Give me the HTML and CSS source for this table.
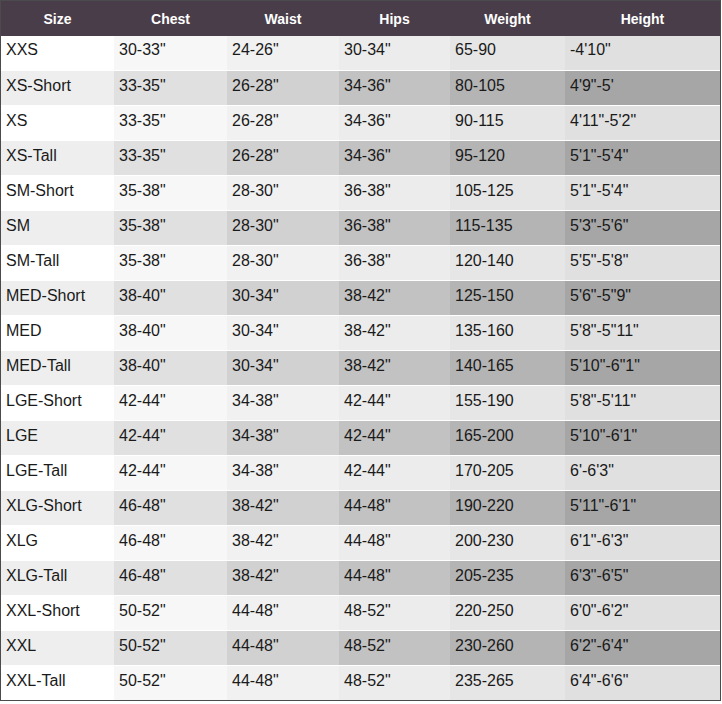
FILE: index.html
```html
<!DOCTYPE html>
<html>
<head>
<meta charset="utf-8">
<link rel="stylesheet" href="styles.css">
</head>
<body>
<table class="sizes">
  <colgroup>
    <col class="c-size"><col class="c-chest"><col class="c-waist"><col class="c-hips"><col class="c-weight"><col class="c-height">
  </colgroup>
  <thead>
    <tr><th>Size</th><th>Chest</th><th>Waist</th><th>Hips</th><th>Weight</th><th>Height</th></tr>
  </thead>
  <tbody>
    <tr><td>XXS</td><td>30-33"</td><td>24-26"</td><td>30-34"</td><td>65-90</td><td>-4'10"</td></tr>
    <tr><td>XS-Short</td><td>33-35"</td><td>26-28"</td><td>34-36"</td><td>80-105</td><td>4'9"-5'</td></tr>
    <tr><td>XS</td><td>33-35"</td><td>26-28"</td><td>34-36"</td><td>90-115</td><td>4'11"-5'2"</td></tr>
    <tr><td>XS-Tall</td><td>33-35"</td><td>26-28"</td><td>34-36"</td><td>95-120</td><td>5'1"-5'4"</td></tr>
    <tr><td>SM-Short</td><td>35-38"</td><td>28-30"</td><td>36-38"</td><td>105-125</td><td>5'1"-5'4"</td></tr>
    <tr><td>SM</td><td>35-38"</td><td>28-30"</td><td>36-38"</td><td>115-135</td><td>5'3"-5'6"</td></tr>
    <tr><td>SM-Tall</td><td>35-38"</td><td>28-30"</td><td>36-38"</td><td>120-140</td><td>5'5"-5'8"</td></tr>
    <tr><td>MED-Short</td><td>38-40"</td><td>30-34"</td><td>38-42"</td><td>125-150</td><td>5'6"-5"9"</td></tr>
    <tr><td>MED</td><td>38-40"</td><td>30-34"</td><td>38-42"</td><td>135-160</td><td>5'8"-5"11"</td></tr>
    <tr><td>MED-Tall</td><td>38-40"</td><td>30-34"</td><td>38-42"</td><td>140-165</td><td>5'10"-6"1"</td></tr>
    <tr><td>LGE-Short</td><td>42-44"</td><td>34-38"</td><td>42-44"</td><td>155-190</td><td>5'8"-5'11"</td></tr>
    <tr><td>LGE</td><td>42-44"</td><td>34-38"</td><td>42-44"</td><td>165-200</td><td>5'10"-6'1"</td></tr>
    <tr><td>LGE-Tall</td><td>42-44"</td><td>34-38"</td><td>42-44"</td><td>170-205</td><td>6'-6'3"</td></tr>
    <tr><td>XLG-Short</td><td>46-48"</td><td>38-42"</td><td>44-48"</td><td>190-220</td><td>5'11"-6'1"</td></tr>
    <tr><td>XLG</td><td>46-48"</td><td>38-42"</td><td>44-48"</td><td>200-230</td><td>6'1"-6'3"</td></tr>
    <tr><td>XLG-Tall</td><td>46-48"</td><td>38-42"</td><td>44-48"</td><td>205-235</td><td>6'3"-6'5"</td></tr>
    <tr><td>XXL-Short</td><td>50-52"</td><td>44-48"</td><td>48-52"</td><td>220-250</td><td>6'0"-6'2"</td></tr>
    <tr><td>XXL</td><td>50-52"</td><td>44-48"</td><td>48-52"</td><td>230-260</td><td>6'2"-6'4"</td></tr>
    <tr><td>XXL-Tall</td><td>50-52"</td><td>44-48"</td><td>48-52"</td><td>235-265</td><td>6'4"-6'6"</td></tr>
  </tbody>
</table>
</body>
</html>
```
FILE: styles.css
```css
html, body {
  margin: 0;
  padding: 0;
  background: #ffffff;
}

.sizes {
  border-collapse: separate;
  border-spacing: 0;
  table-layout: fixed;
  width: 721px;
  border: 1px solid #4d4a4d;
  font-family: "Liberation Sans", Arial, sans-serif;
}

.c-size { width: 113px; }
.c-chest { width: 113px; }
.c-waist { width: 112px; }
.c-hips { width: 111px; }
.c-weight { width: 115px; }
.c-height { width: 155px; }

.sizes th {
  background: #493d4a;
  color: #ffffff;
  font-size: 14px;
  font-weight: bold;
  text-align: center;
  height: 35px;
  padding: 0;
  box-sizing: border-box;
  vertical-align: middle;
}

.sizes td {
  height: 35px;
  box-sizing: border-box;
  padding: 6px 0 0 5px;
  border-top: 1px solid #ffffff;
  vertical-align: top;
  font-size: 16px;
  color: #1a1a1a;
  white-space: nowrap;
}

.sizes tbody tr:first-child td {
  border-top: 0;
  height: 34px;
  padding-top: 5px;
}

.sizes tbody tr:nth-child(odd) td:nth-child(1) { background: #ffffff; }
.sizes tbody tr:nth-child(odd) td:nth-child(2) { background: #f7f7f7; }
.sizes tbody tr:nth-child(odd) td:nth-child(3) { background: #f1f1f1; }
.sizes tbody tr:nth-child(odd) td:nth-child(4) { background: #ececec; }
.sizes tbody tr:nth-child(odd) td:nth-child(5) { background: #e6e6e6; }
.sizes tbody tr:nth-child(odd) td:nth-child(6) { background: #e0e0e0; }

.sizes tbody tr:nth-child(even) td:nth-child(1) { background: #eeeeee; }
.sizes tbody tr:nth-child(even) td:nth-child(2) { background: #e0e0e0; }
.sizes tbody tr:nth-child(even) td:nth-child(3) { background: #d1d1d1; }
.sizes tbody tr:nth-child(even) td:nth-child(4) { background: #c2c2c2; }
.sizes tbody tr:nth-child(even) td:nth-child(5) { background: #b4b4b4; }
.sizes tbody tr:nth-child(even) td:nth-child(6) { background: #a6a6a6; }
```
